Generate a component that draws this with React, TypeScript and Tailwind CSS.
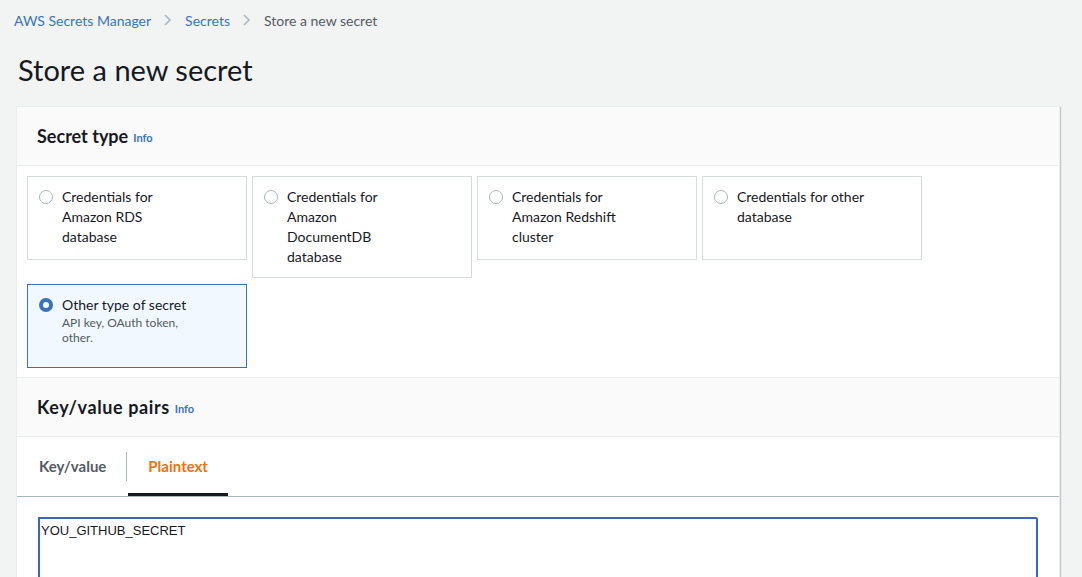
import { type FunctionComponent } from "react";

type Tile = { label: string[]; desc?: string[]; selected?: boolean };

const tiles: Tile[] = [
  { label: ["Credentials for", "Amazon RDS", "database"] },
  { label: ["Credentials for", "Amazon", "DocumentDB", "database"] },
  { label: ["Credentials for", "Amazon Redshift", "cluster"] },
  { label: ["Credentials for other", "database"] },
  { label: ["Other type of secret"], desc: ["API key, OAuth token,", "other."], selected: true },
];

const Radio: FunctionComponent<{ checked?: boolean }> = ({ checked }) =>
  checked ? (
    <span className="mt-[3px] flex h-[14px] w-[14px] shrink-0 items-center justify-center rounded-full bg-[#3a73b9]">
      <span className="h-[6px] w-[6px] rounded-full bg-white" />
    </span>
  ) : (
    <span className="mt-[3px] h-[14px] w-[14px] shrink-0 rounded-full border border-[#aab7b8] bg-white" />
  );

const TileCard: FunctionComponent<{ tile: Tile }> = ({ tile }) => (
  <div
    className={`flex min-h-[84px] w-[220px] gap-[9px] border px-[11px] pt-[10px] pb-[10px] ${
      tile.selected ? "border-[#3a73b9] bg-[#f1f8ff]" : "border-[#d5dbdb] bg-white"
    }`}
  >
    <Radio checked={tile.selected} />
    <div>
      {tile.label.map((l) => (
        <div key={l} className="text-[14px] leading-[20px] text-[#16191f]">
          {l}
        </div>
      ))}
      {tile.desc?.map((d) => (
        <div key={d} className="text-[12px] leading-[15px] text-[#545b64]">
          {d}
        </div>
      ))}
    </div>
  </div>
);

const SectionHeader: FunctionComponent<{ title: string; wide?: boolean }> = ({ title, wide }) => (
  <div className="flex h-[59px] items-center gap-[5px] border-b border-[#eaeded] bg-[#fafafa] px-[20px]">
    <span className={`text-[18px] font-bold text-[#16191f] ${wide ? "tracking-[0.6px]" : ""}`}>{title}</span>
    <span className="mt-[4px] text-[11px] font-bold text-[#3a73b9]">Info</span>
  </div>
);

export default function App() {
  return (
    <div className="min-h-[577px] bg-[#f2f3f3] pl-[16px] pr-[22px] font-['Lato','Liberation_Sans',sans-serif]">
      <nav className="flex h-[40px] items-center gap-[13px] text-[14px]">
        <span className="-ml-[2px] text-[#3a73b9]">AWS Secrets Manager</span>
        <svg width="8" height="12" viewBox="0 0 8 12" className="text-[#aab7b8]">
          <path d="M1 1l5 5-5 5" fill="none" stroke="currentColor" strokeWidth="1.5" />
        </svg>
        <span className="text-[#3a73b9]">Secrets</span>
        <svg width="8" height="12" viewBox="0 0 8 12" className="text-[#aab7b8]">
          <path d="M1 1l5 5-5 5" fill="none" stroke="currentColor" strokeWidth="1.5" />
        </svg>
        <span className="text-[#545b64]">Store a new secret</span>
      </nav>
      <h1 className="mb-[6px] ml-[2px] flex h-[60px] items-center pb-[2px] text-[29px] leading-none text-[#16191f]">
        Store a new secret
      </h1>
      <div className="border border-[#eaeded] bg-white shadow-[1px_1px_1px_0_rgba(0,28,36,0.2)]">
        <SectionHeader title="Secret type" />
        <div className="flex flex-wrap items-start gap-x-[5px] gap-y-[6px] border-b border-[#eaeded] px-[10px] pt-[10px] pb-[9px]">
          {tiles.map((t) => (
            <TileCard key={t.label[0] + t.label[1]} tile={t} />
          ))}
        </div>
        <SectionHeader title="Key/value pairs" wide />
        <div className="flex h-[60px] items-stretch border-b border-[#aab7b8] px-[22px] text-[15px] font-bold">
          <div className="flex items-center pr-[20px] text-[#545b64]">Key/value</div>
          <div className="my-[15px] w-px bg-[#aab7b8]" />
          <div className="ml-[1px] flex items-center border-b-[3px] border-[#16191f] px-[20px] pt-[3px] text-[#ec7211]">
            Plaintext
          </div>
        </div>
        <div className="px-[21px] pt-[20px]">
          <div className="h-[80px] rounded-tr-[2px] border-2 border-[#3b65c4] px-[1px] pt-[2px] font-['Liberation_Sans',sans-serif] text-[13px] text-[#16191f]">
            YOU_GITHUB_SECRET
          </div>
        </div>
      </div>
    </div>
  );
}
